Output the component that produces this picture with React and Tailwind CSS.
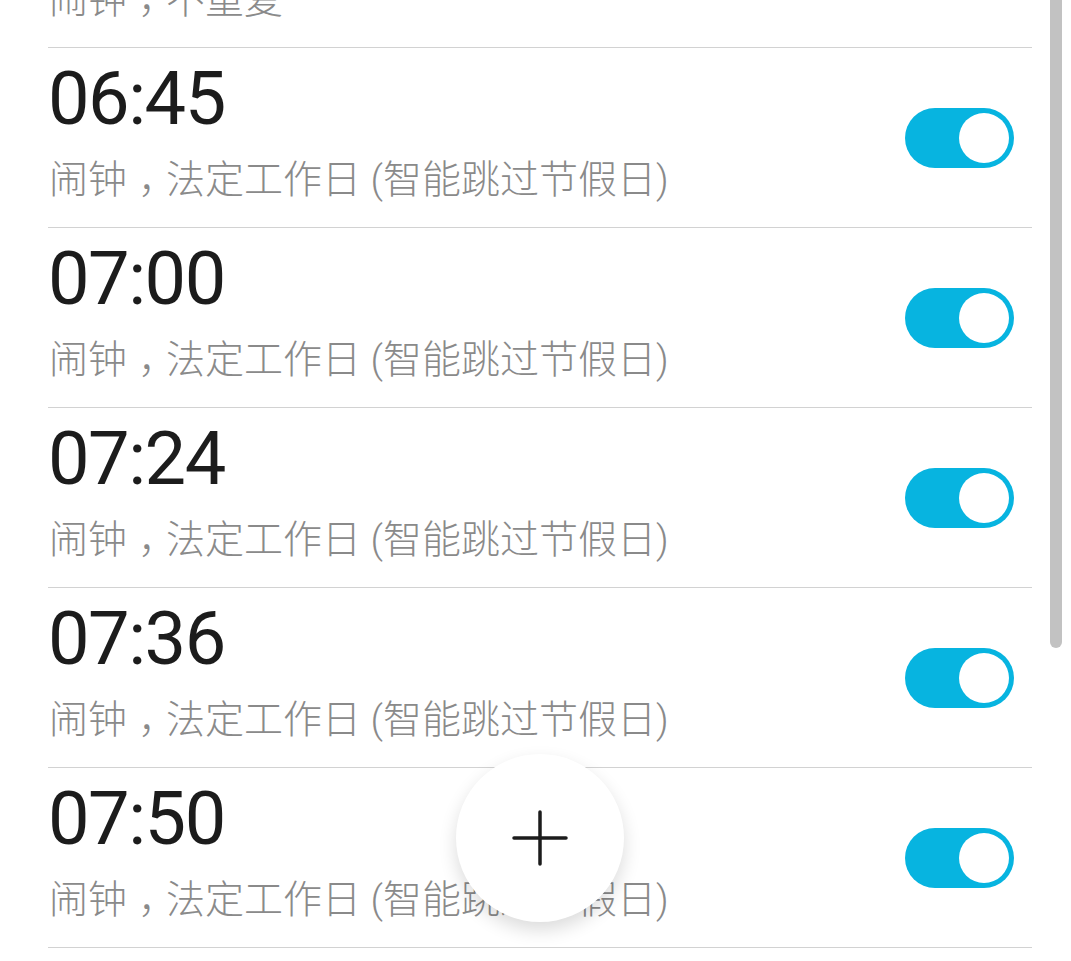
const alarms = [
  { time: "06:30", repeat: "不重复" },
  { time: "06:45", repeat: "法定工作日 (智能跳过节假日)" },
  { time: "07:00", repeat: "法定工作日 (智能跳过节假日)" },
  { time: "07:24", repeat: "法定工作日 (智能跳过节假日)" },
  { time: "07:36", repeat: "法定工作日 (智能跳过节假日)" },
  { time: "07:50", repeat: "法定工作日 (智能跳过节假日)" },
  { time: "08:00", repeat: "法定工作日 (智能跳过节假日)" },
];

function Toggle() {
  return (
    <div className="w-[109px] h-[60px] rounded-full bg-[#07b4e0] flex items-center justify-end pr-[5px]">
      <div className="w-[50px] h-[50px] rounded-full bg-white" />
    </div>
  );
}

function AlarmRow({ time, repeat }) {
  return (
    <div className="h-[180px] border-b border-[#d2d2d2] flex items-center justify-between pr-[18px]">
      <div className="flex flex-col self-start pt-[14px]">
        <span className="text-[74px] leading-[74px] tracking-[-1.5px] text-[#1c1c1c] font-['Roboto',sans-serif]">
          {time}
        </span>
        <span className="mt-[25px] pl-[1px] whitespace-nowrap text-[39px] leading-[39px] font-light text-[#8a8a8a] font-['Roboto','Noto_Sans_CJK_SC',sans-serif]">
          闹钟<span className="pl-[11px] tracking-[-11px]">，</span>{repeat}
        </span>
      </div>
      <Toggle />
    </div>
  );
}

export default function App() {
  return (
    <div className="relative w-[1071px] h-[961px] overflow-hidden bg-white">
      <div className="ml-[48px] w-[984px] -mt-[132px]">
        {alarms.map((a) => (
          <AlarmRow key={a.time} time={a.time} repeat={a.repeat} />
        ))}
      </div>

      {/* scrollbar */}
      <div className="absolute left-[1050px] -top-[6px] w-[12px] h-[654px] rounded-full bg-[#c2c2c2]" />

      {/* add button */}
      <button className="absolute left-[456px] top-[754px] w-[168px] h-[168px] rounded-full bg-white shadow-[0_8px_18px_rgba(0,0,0,0.14)] flex items-center justify-center">
        <svg width="56" height="56" viewBox="0 0 56 56" fill="none" stroke="#1c1c1c" strokeWidth="3.5" strokeLinecap="round">
          <path d="M28 2v52M2 28h52" />
        </svg>
      </button>
    </div>
  );
}
